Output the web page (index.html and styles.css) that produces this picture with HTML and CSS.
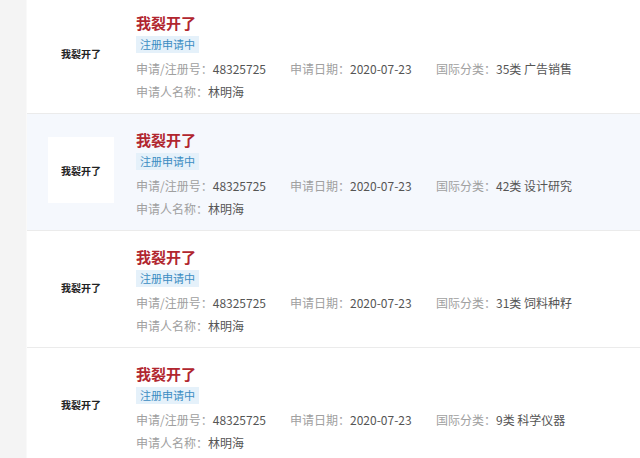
FILE: index.html
```html
<!DOCTYPE html>
<html lang="zh-CN">
<head>
<meta charset="utf-8">
<link rel="stylesheet" href="styles.css">
</head>
<body>
<div class="page">
  <div class="side"></div>
  <div class="list">
    <div class="row first">
      <div class="logo">我裂开了</div>
      <div class="info">
        <div class="title">我裂开了</div>
        <div class="tag">注册申请中</div>
        <div class="line">
          <span class="col c1"><span class="lb">申请/注册号：</span>48325725</span>
          <span class="col c2"><span class="lb">申请日期：</span>2020-07-23</span>
          <span class="col"><span class="lb">国际分类：</span>35类 广告销售</span>
        </div>
        <div class="line"><span class="lb">申请人名称：</span>林明海</div>
      </div>
    </div>
    <div class="row hl">
      <div class="logo">我裂开了</div>
      <div class="info">
        <div class="title">我裂开了</div>
        <div class="tag">注册申请中</div>
        <div class="line">
          <span class="col c1"><span class="lb">申请/注册号：</span>48325725</span>
          <span class="col c2"><span class="lb">申请日期：</span>2020-07-23</span>
          <span class="col"><span class="lb">国际分类：</span>42类 设计研究</span>
        </div>
        <div class="line"><span class="lb">申请人名称：</span>林明海</div>
      </div>
    </div>
    <div class="row">
      <div class="logo">我裂开了</div>
      <div class="info">
        <div class="title">我裂开了</div>
        <div class="tag">注册申请中</div>
        <div class="line">
          <span class="col c1"><span class="lb">申请/注册号：</span>48325725</span>
          <span class="col c2"><span class="lb">申请日期：</span>2020-07-23</span>
          <span class="col"><span class="lb">国际分类：</span>31类 饲料种籽</span>
        </div>
        <div class="line"><span class="lb">申请人名称：</span>林明海</div>
      </div>
    </div>
    <div class="row">
      <div class="logo">我裂开了</div>
      <div class="info">
        <div class="title">我裂开了</div>
        <div class="tag">注册申请中</div>
        <div class="line">
          <span class="col c1"><span class="lb">申请/注册号：</span>48325725</span>
          <span class="col c2"><span class="lb">申请日期：</span>2020-07-23</span>
          <span class="col"><span class="lb">国际分类：</span>9类 科学仪器</span>
        </div>
        <div class="line"><span class="lb">申请人名称：</span>林明海</div>
      </div>
    </div>
  </div>
</div>
</body>
</html>
```
FILE: styles.css
```css
html, body {
  margin: 0;
  padding: 0;
  background: #ffffff;
  font-family: "Noto Sans CJK SC", "Noto Sans", sans-serif;
  overflow: hidden;
}
.page {
  display: flex;
  height: 458px;
  overflow: hidden;
}
.side {
  width: 26px;
  flex: none;
  background: #f4f4f4;
  border-right: 1px solid #f9f9f9;
}
.list {
  flex: 1;
  margin-top: -3px;
}
.row {
  display: flex;
  height: 117px;
  box-sizing: border-box;
  padding: 15px 0 0 21px;
  border-bottom: 1px solid #ebebeb;
  background: #ffffff;
}
.row.hl {
  background: #f5f8fd;
}
.logo {
  width: 66px;
  height: 66px;
  margin-top: 8px;
  flex: none;
  background: #ffffff;
  display: flex;
  align-items: center;
  justify-content: center;
  font-size: 10px;
  font-weight: bold;
  color: #222222;
}
.info {
  margin-left: 22px;
  display: flex;
  flex-direction: column;
  align-items: flex-start;
}
.title {
  font-size: 15px;
  font-weight: bold;
  line-height: 22px;
  color: #b1262f;
}
.tag {
  margin-top: 2px;
  height: 17px;
  line-height: 17px;
  padding: 0 4px;
  font-size: 11px;
  color: #3a8cc2;
  background: #e5f1fa;
}
.line {
  margin-top: 0;
  line-height: 23px;
  font-size: 12px;
  color: #555555;
  white-space: nowrap;
  display: flex;
}
.tag + .line {
  margin-top: 4px;
}
.lb {
  color: #a0a0a0;
}
.col.c1 {
  width: 154px;
}
.col.c2 {
  width: 146px;
}
```
